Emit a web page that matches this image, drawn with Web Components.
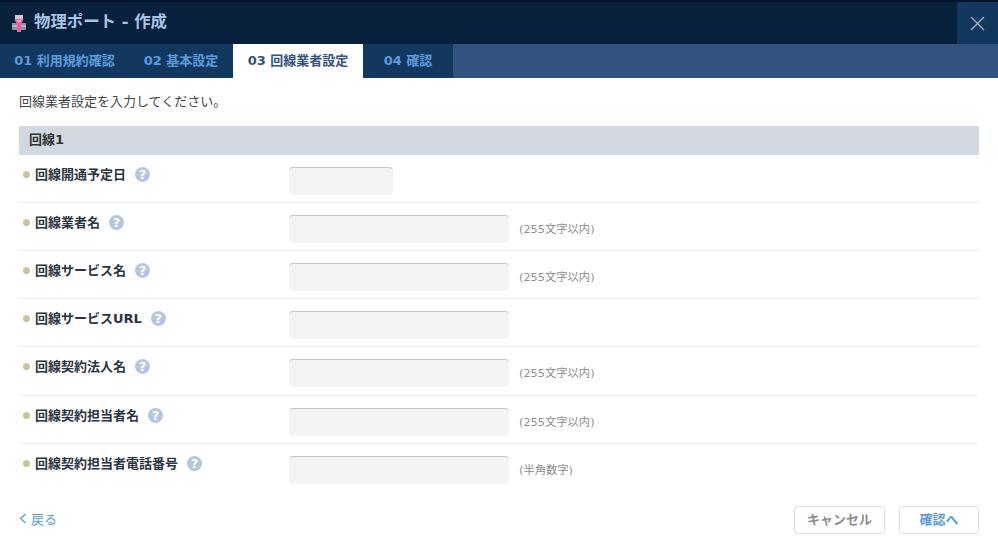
<!DOCTYPE html>
<html lang="ja"><head><meta charset="utf-8">
<style>html,body{margin:0;padding:0;background:#fff}body{width:998px;height:550px;overflow:hidden;font:13px "DejaVu Sans","Noto Sans CJK JP",sans-serif;color:#333}</style>
</head><body>
<port-dialog></port-dialog>
<template id="t-dialog"><style>
:host{display:flex;flex-direction:column;width:998px;height:550px}
.strip{height:2px;background:#02122b}
header{height:42px;background:#07213d;display:flex;align-items:stretch;justify-content:space-between}
.title{display:flex;align-items:center;gap:8px;padding:0 0 6px 12px;font-size:16.400px;font-weight:700;color:#a9c4e8}
.title svg{margin-top:7px}
.close{width:41px;background:#133860;display:flex;align-items:center;justify-content:center}
nav{height:34px;background:#34527f;display:flex}
main{flex:1;padding:0 19px;display:flex;flex-direction:column}
.intro{margin:0;height:48px;display:flex;align-items:center;padding-bottom:4px;box-sizing:border-box;font-size:13px;color:#444}
.head{height:29px;box-sizing:border-box;padding:0 0 4px 10px;background:#d2d8e0;display:flex;align-items:center;font-weight:700;color:#333;font-size:13px}
footer{display:flex;justify-content:space-between;align-items:flex-start;margin-top:13px}
.back{display:flex;align-items:center;gap:4px;color:#5c9ad6;height:28px;font-size:13px;padding-bottom:4px;box-sizing:border-box}
.btns{display:flex;gap:14px}
</style>
<div class="strip"></div>
<header><div class="title"><svg width="14" height="17" viewBox="0 0 14 17"><rect x="3" y="0" width="8" height="6" fill="#c9ccd2"/><rect x="0" y="8" width="14" height="7" fill="#8d9098"/><rect x="0" y="10" width="14" height="2" fill="#b4b7bd"/><path d="M2.500 4h9L9 10v7H5v-7z" fill="#ee5f9f"/><rect x="5" y="5" width="4" height="1.500" fill="#fbc4dc"/></svg><span>物理ポート - 作成</span></div>
<div class="close"><svg width="15" height="15" viewBox="0 0 15 15"><path d="M1 1l13 13M14 1L1 14" stroke="#a6b2bf" stroke-width="1.300" fill="none"/></svg></div></header>
<nav><step-tab w="129">01 利用規約確認</step-tab><step-tab w="104">02 基本設定</step-tab><step-tab w="130" active>03 回線業者設定</step-tab><step-tab w="90">04 確認</step-tab></nav>
<main>
<p class="intro">回線業者設定を入力してください。</p>
<div class="head">回線1</div>
<form-row label="回線開通予定日" w="104"></form-row>
<form-row label="回線業者名" note="(255文字以内)"></form-row>
<form-row label="回線サービス名" note="(255文字以内)"></form-row>
<form-row label="回線サービスURL"></form-row>
<form-row label="回線契約法人名" note="(255文字以内)" h="49"></form-row>
<form-row label="回線契約担当者名" note="(255文字以内)"></form-row>
<form-row label="回線契約担当者電話番号" note="(半角数字)" last></form-row>
<footer><div class="back"><svg width="8" height="11" viewBox="0 0 8 11"><path d="M6.500 1L1.500 5.500l5 4.500" stroke="#5c9ad6" stroke-width="1.200" fill="none"/></svg>戻る</div>
<div class="btns"><action-btn w="91" color="#8c8c8c">キャンセル</action-btn><action-btn w="80" color="#5c9ad6">確認へ</action-btn></div></footer>
</main></template>
<template id="t-tab"><style>
:host{display:flex;align-items:center;justify-content:center;background:#133860;color:#5b9bdc;font-weight:700;font-size:13px;padding-bottom:4px;box-sizing:border-box;white-space:nowrap}
:host([active]){background:#fff;color:#34527f}
</style><slot></slot></template>
<template id="t-row"><style>
:host{display:flex;box-sizing:border-box;height:48px;border-bottom:1px solid #e9edf1;padding-top:12px}
:host([last]){border-bottom:0;height:49px}
.l{width:270px;display:flex;align-items:flex-start;box-sizing:border-box;padding-left:4px;font-weight:700;font-size:13px;line-height:15px;color:#2b3440;height:16px}
.dot{width:7px;height:7px;border-radius:50%;background:#c8c49e;margin:4px 5px 0 0;flex:none}
.q{width:15px;height:15px;margin-left:9px;flex:none;border-radius:50%;background:#b5c6de;color:#fff;font:700 13px/15px "DejaVu Sans",sans-serif;text-align:center}
.i{width:220px;height:28px;box-sizing:border-box;background:#f4f4f4;border-radius:4px;border-top:1px solid #c6c6c6;flex:none}
.n{margin-left:10px;height:28px;display:flex;align-items:center;padding-bottom:3px;box-sizing:border-box;font-size:11.300px;color:#8d8d8d}
.lab{white-space:nowrap}
</style><div class="l"><span class="dot"></span><span class="lab"></span><span class="q">?</span></div><div class="i"></div><div class="n"></div></template>
<template id="t-btn"><style>
:host{display:flex;align-items:center;justify-content:center;box-sizing:border-box;height:28px;border:1px solid #dcdcdc;border-radius:4px;font-weight:700;font-size:13px;background:#fff;padding-bottom:4px}
</style><slot></slot></template>
<script>
function mk(name,tid,init){customElements.define(name,class extends HTMLElement{constructor(){super();this.attachShadow({mode:"open"}).appendChild(document.getElementById(tid).content.cloneNode(true))}connectedCallback(){init&&init(this)}})}
mk("step-tab","t-tab",e=>{e.style.width=e.getAttribute("w")+"px"});
mk("action-btn","t-btn",e=>{e.style.width=e.getAttribute("w")+"px";e.style.color=e.getAttribute("color")});
mk("form-row","t-row",e=>{const s=e.shadowRoot;s.querySelector(".lab").textContent=e.getAttribute("label");const n=e.getAttribute("note");if(n)s.querySelector(".n").textContent=n;if(e.getAttribute("w"))s.querySelector(".i").style.width=e.getAttribute("w")+"px";if(e.getAttribute("h"))e.style.height=e.getAttribute("h")+"px"});
mk("port-dialog","t-dialog");
</script>
</body></html>
